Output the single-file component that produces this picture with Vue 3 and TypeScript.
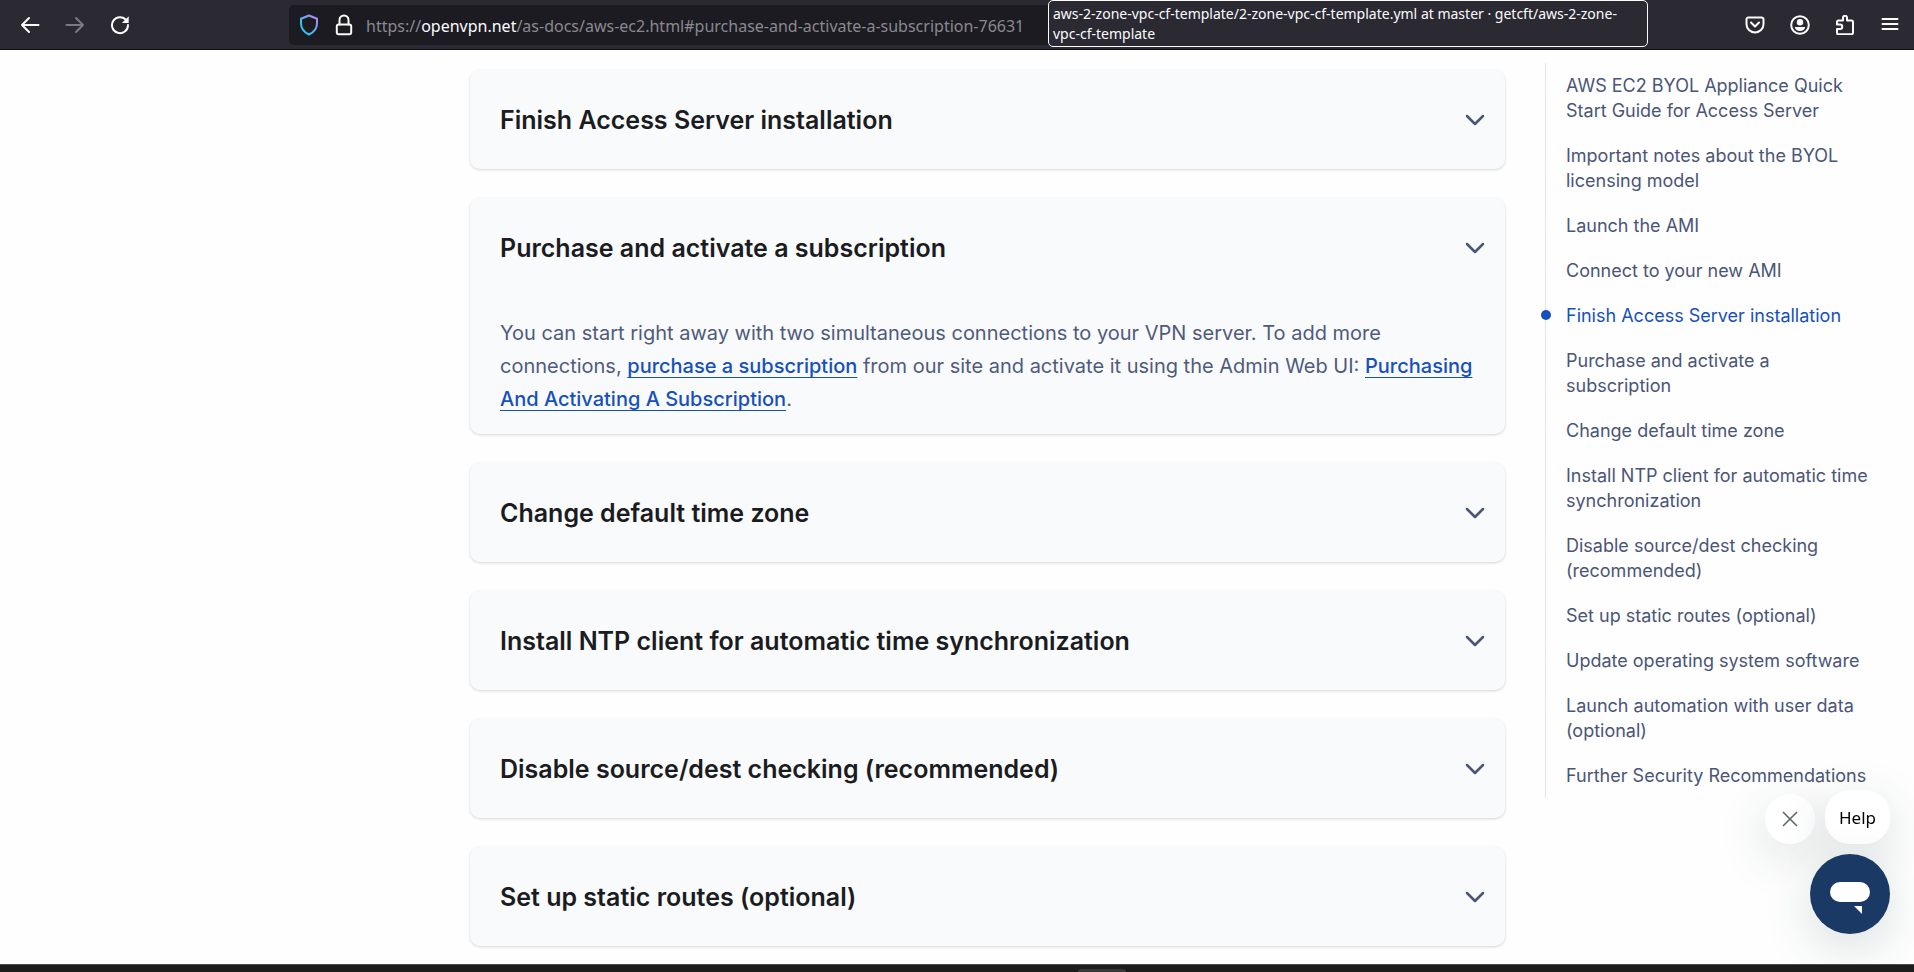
<script setup lang="ts">
import { ref } from 'vue'

interface Section {
  title: string
  open?: boolean
}

interface TocEntry {
  label: string
  active?: boolean
}

const tooltip = 'aws-2-zone-vpc-cf-template/2-zone-vpc-cf-template.yml at master · getcft/aws-2-zone-vpc-cf-template'

const sections = ref<Section[]>([
  { title: 'Finish Access Server installation' },
  { title: 'Purchase and activate a subscription', open: true },
  { title: 'Change default time zone' },
  { title: 'Install NTP client for automatic time synchronization' },
  { title: 'Disable source/dest checking (recommended)' },
  { title: 'Set up static routes (optional)' },
])

const toc: TocEntry[] = [
  { label: 'AWS EC2 BYOL Appliance Quick Start Guide for Access Server' },
  { label: 'Important notes about the BYOL licensing model' },
  { label: 'Launch the AMI' },
  { label: 'Connect to your new AMI' },
  { label: 'Finish Access Server installation', active: true },
  { label: 'Purchase and activate a subscription' },
  { label: 'Change default time zone' },
  { label: 'Install NTP client for automatic time synchronization' },
  { label: 'Disable source/dest checking (recommended)' },
  { label: 'Set up static routes (optional)' },
  { label: 'Update operating system software' },
  { label: 'Launch automation with user data (optional)' },
  { label: 'Further Security Recommendations' },
]
</script>

<template>
  <div class="window">
    <header class="toolbar">
      <nav class="nav-buttons" aria-label="History">
        <button class="tool" type="button" aria-label="Back">
          <svg viewBox="0 0 20 20"><path d="M18.5 10H2M9 3L2 10l7 7" /></svg>
        </button>
        <button class="tool dim" type="button" aria-label="Forward" disabled>
          <svg viewBox="0 0 20 20"><path d="M1.500 10H18M11 3l7 7-7 7" /></svg>
        </button>
        <button class="tool" type="button" aria-label="Reload">
          <svg viewBox="0 0 20 20">
            <path d="M16.300 5.200A8 8 0 1 0 18 10" />
            <path class="solid" d="M18.700 1.300v6.200a.6.6 0 0 1-.6.6h-6.200z" />
          </svg>
        </button>
      </nav>
      <div class="address">
        <svg class="shield" viewBox="0 0 20 22" aria-hidden="true">
          <defs>
            <linearGradient id="shield-tint" x1="0" y1="1" x2="1" y2="0">
              <stop offset="0.25" stop-color="#2fc6f5" />
              <stop offset="0.9" stop-color="#a98df5" />
            </linearGradient>
          </defs>
          <path d="M10 1.500l8 3.200v4.500c0 5-3 9-8 11.300C5 18.200 2 14.200 2 9.200V4.700z" stroke="url(#shield-tint)" />
        </svg>
        <svg class="lock" viewBox="0 0 20 22" aria-hidden="true">
          <path d="M5.500 10.500V6a4.500 4.500 0 0 1 9 0v4.500" />
          <rect x="2.800" y="10.500" width="14.400" height="9.700" rx="2" />
        </svg>
        <p class="url">https://<span class="host">openvpn.net</span>/as-docs/aws-ec2.html#purchase-and-activate-a-subscription-76631</p>
      </div>
      <div class="actions">
        <button class="tool" type="button" aria-label="Save to Pocket">
          <svg viewBox="0 0 20 20"><path d="M3.300 2.500h13.400a1.800 1.800 0 0 1 1.800 1.800v4.900a8.500 8.300 0 0 1-17 0V4.300a1.800 1.800 0 0 1 1.800-1.800z" /><path d="M6 7.500l4 4 4-4" /></svg>
        </button>
        <button class="tool" type="button" aria-label="Account">
          <svg viewBox="0 0 20 20"><circle cx="10" cy="10" r="8.800" /><circle class="solid" cx="10" cy="7.300" r="3.200" /><path class="solid" d="M4.800 12h10.400c-.3 2.500-2.500 4-5.200 4s-4.900-1.500-5.200-4z" /></svg>
        </button>
        <button class="tool" type="button" aria-label="Extensions">
          <svg viewBox="0 0 20 20"><path d="M8 5.500V2.800a2 2 0 0 1 4 0v2.700h4.500a1.500 1.500 0 0 1 1.500 1.500v11a1.200 1.200 0 0 1-1.200 1.200H3.200A1.200 1.200 0 0 1 2 18v-4h3a2.200 2.200 0 0 0 0-4.500H2V7a1.500 1.500 0 0 1 1.500-1.500z" /></svg>
        </button>
        <button class="tool" type="button" aria-label="Menu">
          <svg viewBox="0 0 20 20"><path d="M2.500 4h15M2.500 9h15M2.500 14h15" /></svg>
        </button>
      </div>
      <div class="tooltip" role="tooltip">{{ tooltip }}</div>
    </header>

    <div class="page">
      <main class="cards">
        <section v-for="section in sections" :key="section.title" class="card">
          <h2>
            <button class="card-head" type="button">
              <span>{{ section.title }}</span>
              <svg viewBox="0 0 20 14" aria-hidden="true"><path d="M2 2l8 8 8-8" /></svg>
            </button>
          </h2>
          <p v-if="section.open" class="card-body">
            You can start right away with two simultaneous connections to your VPN server. To add more connections,
            <a href="#purchase">purchase a subscription</a> from our site and activate it using the Admin Web UI:
            <a href="#activate">Purchasing And Activating A Subscription</a>.
          </p>
        </section>
      </main>
      <aside>
        <nav class="toc" aria-label="On this page">
          <a v-for="entry in toc" :key="entry.label" href="#" :class="{ active: entry.active }">{{ entry.label }}</a>
        </nav>
      </aside>
    </div>

    <div class="chat">
      <div class="chat-row">
        <button class="chat-close" type="button" aria-label="Close">
          <svg viewBox="0 0 16 16"><path d="M1 1l14 14M15 1L1 15" /></svg>
        </button>
        <button class="chat-help" type="button">Help</button>
      </div>
      <button class="launcher" type="button" aria-label="Open chat">
        <svg viewBox="0 0 40 32"><rect width="40" height="20" rx="10" /><path d="M24 24h8v8z" /></svg>
      </button>
    </div>

    <footer class="taskbar"><span class="task"></span></footer>
  </div>
</template>

<style>
body {
  margin: 0;
  background: #fefefe;
}
</style>

<style scoped>
.window {
  display: flex;
  flex-direction: column;
  height: 100vh;
  overflow: hidden;
  font-family: Inter, "Liberation Sans", sans-serif;
}

button {
  margin: 0;
  padding: 0;
  border: 0;
  background: none;
  font: inherit;
  color: inherit;
}

h2,
p {
  margin: 0;
}

.toolbar {
  position: relative;
  flex: none;
  display: flex;
  align-items: center;
  height: 49px;
  padding: 0 14px 0 20px;
  border-bottom: 1px solid #0c0c12;
  background: #2b2a33;
  color: #fbfbfe;
  font-family: "Noto Sans", "Open Sans", sans-serif;
}

.nav-buttons {
  display: flex;
  gap: 25px;
  width: 269px;
}

.tool {
  width: 20px;
  height: 20px;
}

.tool svg {
  display: block;
  width: 20px;
  height: 20px;
}

.toolbar svg {
  fill: none;
  stroke: currentColor;
  stroke-width: 2;
  stroke-linecap: round;
  stroke-linejoin: round;
}

.toolbar .solid {
  fill: currentColor;
  stroke: none;
}

.dim {
  color: #7b7a81;
}

.address {
  flex: 1;
  display: flex;
  align-items: center;
  height: 40px;
  margin-right: 135px;
  padding-left: 10px;
  border-radius: 5px;
  background: #1c1b22;
}

.address svg {
  flex: none;
  width: 20px;
  height: 22px;
}

.shield {
  margin-right: 15px;
}

.lock {
  margin-right: 12px;
}

.url {
  padding-top: 2px;
  color: #8a898f;
  font-size: 16px;
  white-space: nowrap;
}

.host {
  color: #fbfbfe;
}

.actions {
  display: flex;
  gap: 25px;
}

.tooltip {
  position: absolute;
  top: 0;
  left: 1048px;
  z-index: 2;
  box-sizing: border-box;
  width: 600px;
  padding: 3px 4px 2px;
  border: 1px solid #fbfbfe;
  border-radius: 5px;
  background: #2b2a33;
  font-size: 14px;
  line-height: 20px;
}

.page {
  flex: 1;
  min-height: 0;
  display: grid;
  grid-template-columns: minmax(0, 1fr) 369px;
  column-gap: 40px;
  align-items: start;
  padding-left: 470px;
}

.cards {
  display: flex;
  flex-direction: column;
  gap: 29px;
  padding-top: 20px;
}

.card {
  border-radius: 10px;
  background: #f9fafc;
  box-shadow: 0 1px 3px rgba(0, 0, 0, 0.16);
}

.card-head {
  display: flex;
  align-items: center;
  justify-content: space-between;
  width: 100%;
  padding: 33px 20px 31px 30px;
  color: #1a1c21;
  font-size: 25px;
  font-weight: 600;
  line-height: 35px;
  text-align: left;
}

.card-head svg {
  width: 20px;
  height: 14px;
  fill: none;
  stroke: #4a5578;
  stroke-width: 2.5;
  stroke-linecap: round;
  stroke-linejoin: round;
}

.card-body {
  padding: 20px 30px 18px;
  color: #4f5b7c;
  font-size: 20px;
  line-height: 33px;
}

.card-body a {
  color: #1550bd;
  font-weight: 500;
  text-decoration: underline;
  text-decoration-thickness: 1px;
  text-underline-offset: 4px;
}

.toc {
  display: flex;
  flex-direction: column;
  gap: 20px;
  margin-top: 13px;
  padding: 10px 40px 10px 20px;
  border-left: 1px solid #e2e4e8;
}

.toc a {
  position: relative;
  color: #4a5578;
  font-size: 18px;
  line-height: 25px;
  text-decoration: none;
}

.toc .active {
  color: #1550bd;
}

.toc .active::before {
  content: "";
  position: absolute;
  top: 7px;
  left: -25px;
  width: 10px;
  height: 10px;
  border-radius: 50%;
  background: #1550bd;
}

.chat {
  position: fixed;
  right: 24px;
  bottom: 38px;
  display: flex;
  flex-direction: column;
  align-items: flex-end;
  gap: 10px;
}

.chat-row {
  display: flex;
  align-items: flex-end;
  gap: 10px;
}

.chat-close,
.chat-help,
.launcher {
  display: grid;
  place-items: center;
  height: 50px;
  border-radius: 25px;
  background: #fff;
  box-shadow: 0 14px 50px rgba(20, 60, 60, 0.16);
}

.chat-close {
  width: 50px;
}

.chat-close svg {
  width: 16px;
  height: 16px;
  fill: none;
  stroke: #5b6468;
  stroke-width: 1.5;
}

.chat-help {
  height: 54px;
  padding: 0 14px;
  color: #000;
  font-family: "Noto Sans", "Open Sans", sans-serif;
  font-size: 17px;
}

.launcher {
  width: 80px;
  height: 80px;
  border-radius: 50%;
  background: #1b3965;
}

.launcher svg {
  width: 40px;
  height: 32px;
  margin-top: 8px;
  fill: #fff;
}

.taskbar {
  flex: none;
  position: relative;
  z-index: 1;
  display: flex;
  align-items: flex-end;
  justify-content: center;
  height: 7px;
  padding-left: 290px;
  border-top: 1px solid #4a4a4a;
  background: #1c1c1c;
}

.task {
  width: 48px;
  height: 3px;
  border-radius: 3px 3px 0 0;
  background: #383838;
}
</style>
